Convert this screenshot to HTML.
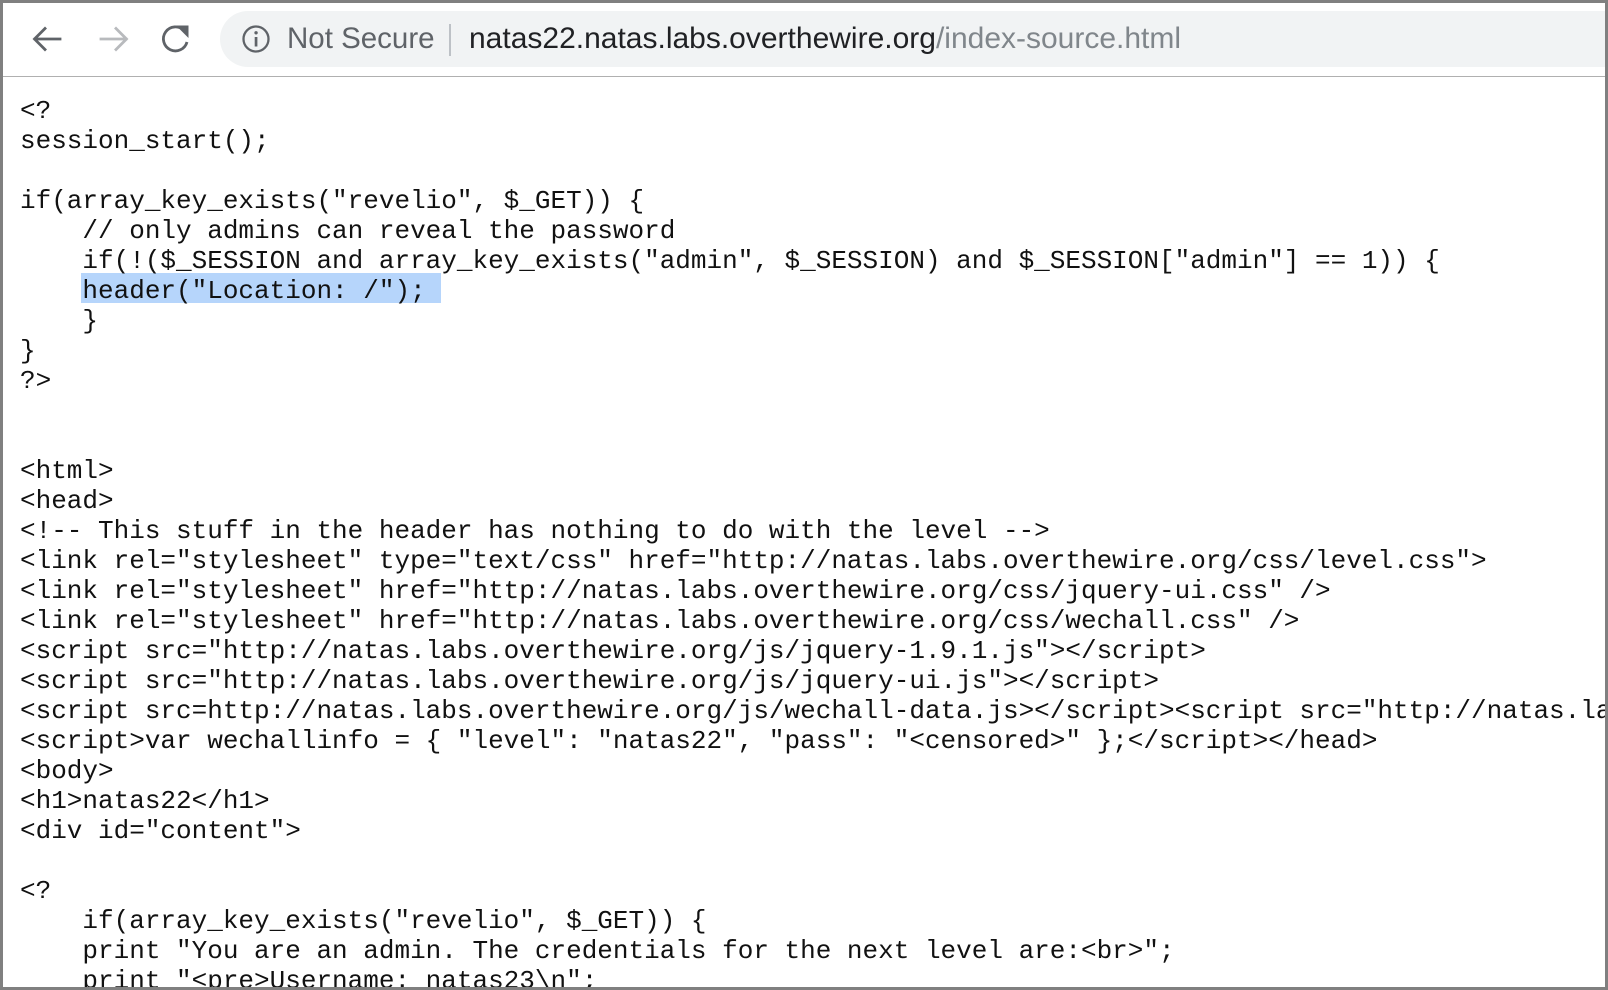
<!DOCTYPE html>
<html><head><meta charset="utf-8"><style>
html,body{margin:0;padding:0;}
body{width:1608px;height:990px;position:relative;overflow:hidden;background:#808080;}
#win{position:absolute;left:3px;top:3px;width:1602px;height:984px;background:#fff;overflow:hidden;}
#bar{position:absolute;left:0;top:0;width:1602px;height:73px;border-bottom:1px solid #b0b0b0;background:#fff;}
#omni{position:absolute;left:217px;top:8px;width:1500px;height:56px;border-radius:28px;background:#f1f3f4;}
.t{position:absolute;font-family:"Liberation Sans",Arial,sans-serif;font-size:29.5px;line-height:56px;top:8px;white-space:nowrap;}
pre{position:absolute;left:17px;top:93px;margin:0;font-family:"Liberation Mono","Courier New",monospace;font-size:26px;line-height:30px;color:#111;white-space:pre;}
.hl{position:absolute;left:78px;top:270px;width:360px;height:30px;background:#b6d5fb;}
</style></head><body><div id="win">
<div id="bar">
<svg style="position:absolute;left:0;top:0" width="217" height="73">
<g fill="none" stroke-width="2.8" stroke-linecap="square">
<path d="M32 36H57 M42 25.5L31.5 36L42 46.5" stroke="#5f6368"/>
<path d="M98 36H123 M113 25.5L123.5 36L113 46.5" stroke="#b8babd"/>
<path d="M181 27.5A12 12 0 1 0 184 39" stroke="#5f6368" stroke-linecap="butt"/>
</g>
<path d="M173 22.5L185.5 22.5L185.5 35Z" fill="#5f6368"/>
</svg>
<div id="omni"></div>
<svg style="position:absolute;left:237px;top:20px" width="32" height="32"><circle cx="16" cy="16" r="12.5" fill="none" stroke="#5f6368" stroke-width="2.3"/><rect x="14.7" y="14" width="2.7" height="9.5" fill="#5f6368"/><circle cx="16.05" cy="9.8" r="1.7" fill="#5f6368"/></svg>
<div class="t" style="left:284px;color:#5f6368;">Not Secure</div>
<div style="position:absolute;left:446px;top:21px;width:2px;height:32px;background:#bdc1c6;"></div>
<div class="t" style="left:466px;color:#202124;font-size:30px;">natas22.natas.labs.overthewire.org<span style="color:#80868b">/index-source.html</span></div>
</div>
<div class="hl"></div>
<pre>&lt;?
session_start();

if(array_key_exists("revelio", $_GET)) {
    // only admins can reveal the password
    if(!($_SESSION and array_key_exists("admin", $_SESSION) and $_SESSION["admin"] == 1)) {
    header("Location: /");
    }
}
?&gt;


&lt;html&gt;
&lt;head&gt;
&lt;!-- This stuff in the header has nothing to do with the level --&gt;
&lt;link rel="stylesheet" type="text/css" href="http://natas.labs.overthewire.org/css/level.css"&gt;
&lt;link rel="stylesheet" href="http://natas.labs.overthewire.org/css/jquery-ui.css" /&gt;
&lt;link rel="stylesheet" href="http://natas.labs.overthewire.org/css/wechall.css" /&gt;
&lt;script src="http://natas.labs.overthewire.org/js/jquery-1.9.1.js"&gt;&lt;/script&gt;
&lt;script src="http://natas.labs.overthewire.org/js/jquery-ui.js"&gt;&lt;/script&gt;
&lt;script src=http://natas.labs.overthewire.org/js/wechall-data.js&gt;&lt;/script&gt;&lt;script src="http://natas.labs.overthewire.org/js/wechall.js"&gt;&lt;/script&gt;
&lt;script&gt;var wechallinfo = { "level": "natas22", "pass": "&lt;censored&gt;" };&lt;/script&gt;&lt;/head&gt;
&lt;body&gt;
&lt;h1&gt;natas22&lt;/h1&gt;
&lt;div id="content"&gt;

&lt;?
    if(array_key_exists("revelio", $_GET)) {
    print "You are an admin. The credentials for the next level are:&lt;br&gt;";
    print "&lt;pre&gt;Username: natas23\n";
</pre>
</div></body></html>
